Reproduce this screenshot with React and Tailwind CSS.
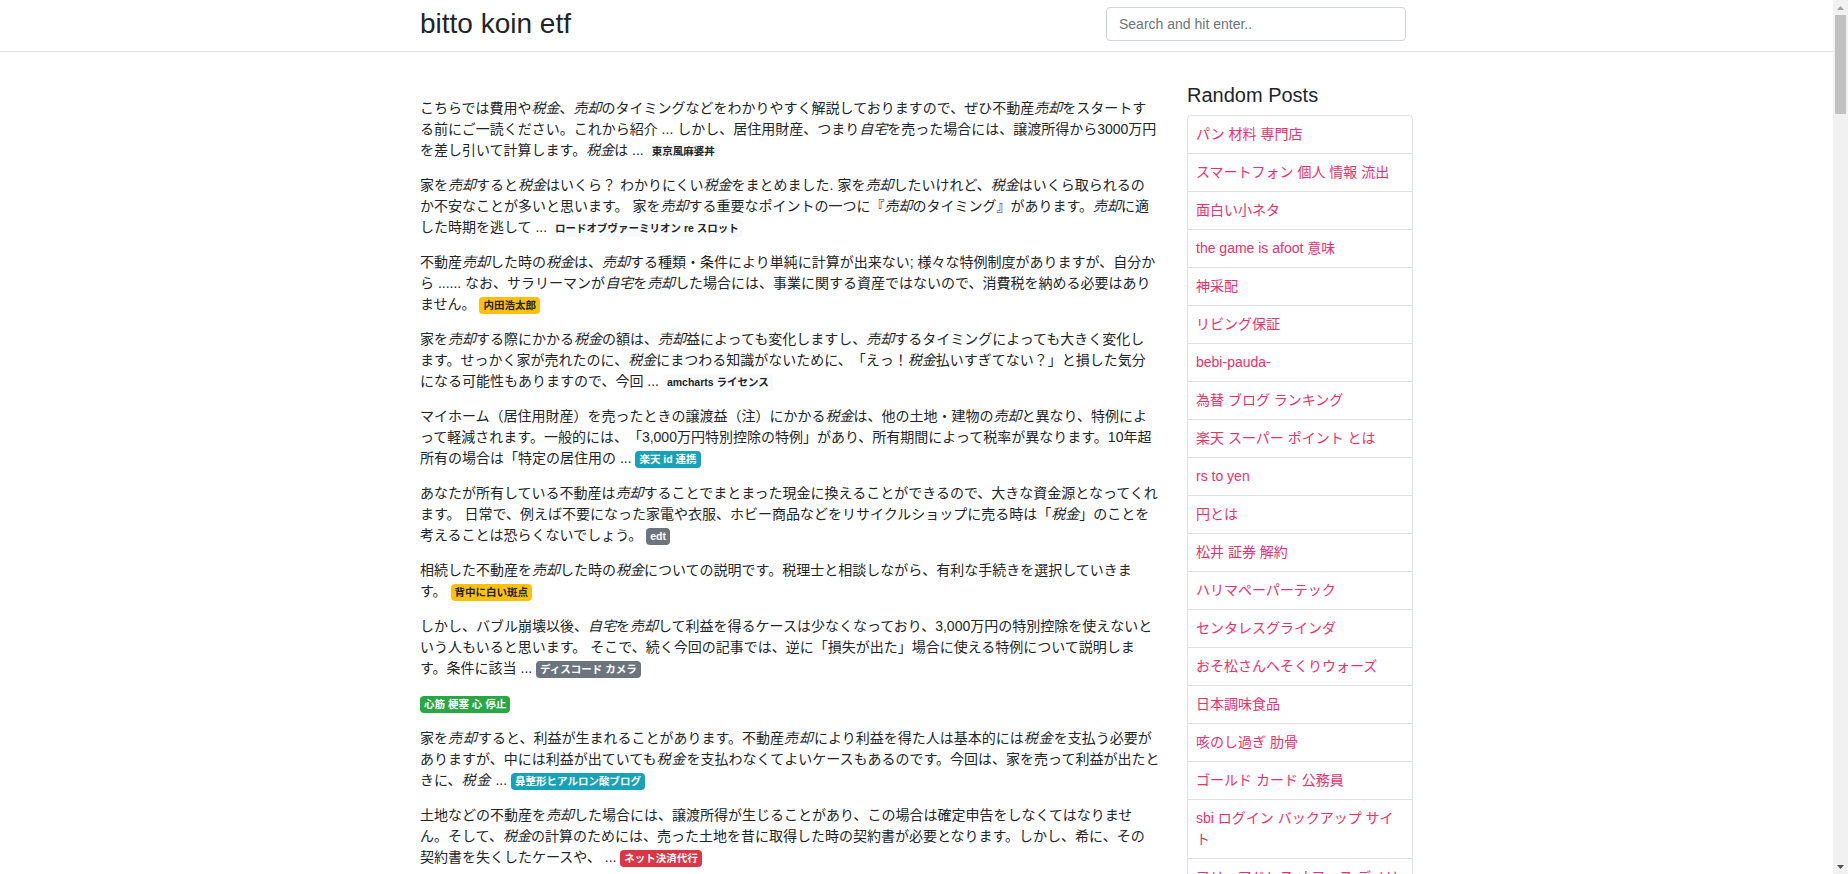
import React from 'react';

const FONT = { fontFamily: '"Liberation Sans", "Noto Sans CJK JP", sans-serif' };

const BADGE = {
  light: 'bg-[#f8f9fa] text-[#212529]',
  warning: 'bg-[#ffc107] text-[#212529]',
  info: 'bg-[#17a2b8] text-white',
  secondary: 'bg-[#6c757d] text-white',
  success: 'bg-[#28a745] text-white',
  danger: 'bg-[#dc3545] text-white',
};

// テキストの *...* 部分は斜体 (em)
// fit / emFit: 行末の折り返し位置を元ページに合わせるための段落ごとの調整
const posts = [
  {
    text: 'こちらでは費用や*税金*、*売却*のタイミングなどをわかりやすく解説しておりますので、ぜひ不動産*売却*をスタートする前にご一読ください。これから紹介 ... しかし、居住用財産、つまり*自宅*を売った場合には、譲渡所得から3000万円を差し引いて計算します。*税金*は ... ',
    tag: '東京風麻婆丼',
    kind: 'light',
  },
  {
    text: '家を*売却*すると*税金*はいくら？ わかりにくい*税金*をまとめました. 家を*売却*したいけれど、*税金*はいくら取られるのか不安なことが多いと思います。 家を*売却*する重要なポイントの一つに『*売却*のタイミング』があります。*売却*に適した時期を逃して ... ',
    tag: 'ロードオブヴァーミリオン re スロット',
    kind: 'light',
  },
  {
    text: '不動産*売却*した時の*税金*は、*売却*する種類・条件により単純に計算が出来ない; 様々な特例制度がありますが、自分から ...... なお、サラリーマンが*自宅*を*売却*した場合には、事業に関する資産ではないので、消費税を納める必要はありません。 ',
    tag: '内田浩太郎',
    kind: 'warning',
  },
  {
    text: '家を*売却*する際にかかる*税金*の額は、*売却*益によっても変化しますし、*売却*するタイミングによっても大きく変化します。せっかく家が売れたのに、*税金*にまつわる知識がないために、「えっ！*税金*払いすぎてない？」と損した気分になる可能性もありますので、今回 ... ',
    tag: 'amcharts ライセンス',
    kind: 'light',
  },
  {
    text: 'マイホーム（居住用財産）を売ったときの譲渡益（注）にかかる*税金*は、他の土地・建物の*売却*と異なり、特例によって軽減されます。一般的には、「3,000万円特別控除の特例」があり、所有期間によって税率が異なります。10年超所有の場合は「特定の居住用の ... ',
    tag: '楽天 id 連携',
    kind: 'info',
  },
  {
    text: 'あなたが所有している不動産は*売却*することでまとまった現金に換えることができるので、大きな資金源となってくれます。 日常で、例えば不要になった家電や衣服、ホビー商品などをリサイクルショップに売る時は「*税金*」のことを考えることは恐らくないでしょう。 ',
    tag: 'edt',
    kind: 'secondary',
    fit: 'w-[742px]',
  },
  {
    text: '相続した不動産を*売却*した時の*税金*についての説明です。税理士と相談しながら、有利な手続きを選択していきます。 ',
    tag: '背中に白い斑点',
    kind: 'warning',
  },
  {
    text: 'しかし、バブル崩壊以後、*自宅*を*売却*して利益を得るケースは少なくなっており、3,000万円の特別控除を使えないという人もいると思います。 そこで、続く今回の記事では、逆に「損失が出た」場合に使える特例について説明します。条件に該当 ... ',
    tag: 'ディスコード カメラ',
    kind: 'secondary',
  },
  { text: '', tag: '心筋 梗塞 心 停止', kind: 'success' },
  {
    text: '家を*売却*すると、利益が生まれることがあります。不動産*売却*により利益を得た人は基本的には*税金*を支払う必要がありますが、中には利益が出ていても*税金*を支払わなくてよいケースもあるのです。今回は、家を売って利益が出たときに、*税金* ... ',
    tag: '鼻整形ヒアルロン酸ブログ',
    kind: 'info',
    fit: 'w-[744px]',
    emFit: 'tracking-[1px]',
  },
  {
    text: '土地などの不動産を*売却*した場合には、譲渡所得が生じることがあり、この場合は確定申告をしなくてはなりません。そして、*税金*の計算のためには、売った土地を昔に取得した時の契約書が必要となります。しかし、希に、その契約書を失くしたケースや、 ... ',
    tag: 'ネット決済代行',
    kind: 'danger',
  },
];

const randomPosts = [
  'パン 材料 専門店',
  'スマートフォン 個人 情報 流出',
  '面白い小ネタ',
  'the game is afoot 意味',
  '神采配',
  'リビング保証',
  'bebi-pauda-',
  '為替 ブログ ランキング',
  '楽天 スーパー ポイント とは',
  'rs to yen',
  '円とは',
  '松井 証券 解約',
  'ハリマペーパーテック',
  'センタレスグラインダ',
  'おそ松さんへそくりウォーズ',
  '日本調味食品',
  '咳のし過ぎ 肋骨',
  'ゴールド カード 公務員',
  'sbi ログイン バックアップ サイト',
  'フリーアドレス オフィス デメリット',
  '住宅 ローン 借り換え',
];

function Rich({ text, emClass }) {
  return text.split('*').map((part, i) =>
    i % 2 === 1 ? (
      <em key={i} className={emClass}>
        {part}
      </em>
    ) : (
      <React.Fragment key={i}>{part}</React.Fragment>
    )
  );
}

function Badge({ kind, children }) {
  return (
    <a
      href="#"
      className={`inline-block px-[4px] py-[3px] text-[10.5px] font-bold leading-none whitespace-nowrap align-baseline rounded-[4px] ${BADGE[kind]}`}
    >
      {children}
    </a>
  );
}

function Header() {
  return (
    <header className="border-b border-[#dee2e6] pt-[7px] pb-[10px]">
      <div className="w-[993px] mx-auto flex items-center justify-between">
        <a href="#" className="text-[28px] leading-[34px] text-[#212529]">
          bitto koin etf
        </a>
        <input
          type="text"
          placeholder="Search and hit enter.."
          className="w-[300px] h-[34px] mr-[7px] px-3 text-[14px] text-[#495057] placeholder-[#6c757d] border border-[#ced4da] rounded-[4px] bg-white outline-none"
        />
      </div>
    </header>
  );
}

function Scrollbar() {
  return (
    <div className="w-[15px] shrink-0 bg-[#f1f1f1] flex flex-col items-center">
      <div className="h-[15px] w-full flex items-center justify-center">
        <svg width="7" height="4" viewBox="0 0 7 4">
          <path d="M3.5 0 L7 4 L0 4 Z" fill="#a3a3a3" />
        </svg>
      </div>
      <div className="w-[11px] h-[99px] bg-[#c1c1c1]" />
      <div className="flex-1" />
      <div className="h-[15px] w-full flex items-center justify-center">
        <svg width="7" height="4" viewBox="0 0 7 4">
          <path d="M0 0 L7 0 L3.5 4 Z" fill="#505050" />
        </svg>
      </div>
    </div>
  );
}

function App() {
  return (
    <div className="h-screen flex overflow-hidden bg-white">
      <div
        className="flex-1 overflow-hidden text-[#212529] text-[14px] leading-[21px] [text-spacing-trim:space-all]"
        style={FONT}
      >
        <Header />
        <div className="w-[993px] mx-auto mt-[31px] flex items-start gap-[30px]">
          <main className="w-[737px] shrink-0 pt-[15px]">
            {[0, 1].map((p) =>
              posts.map((post, i) => (
                <p key={`${p}-${i}`} className={`mb-[14px] ${post.fit || ''}`}>
                  <Rich text={post.text} emClass={post.emFit} /> <Badge kind={post.kind}>{post.tag}</Badge>
                </p>
              ))
            )}
          </main>
          <aside className="w-[226px] shrink-0">
            <h5 className="text-[20px] leading-[24px] font-medium mb-[8px]">Random Posts</h5>
            <ul className="flex flex-col">
              {randomPosts.map((t, i) => (
                <li
                  key={i}
                  className={`border border-[#dee2e6] bg-white px-[8px] py-[8px] ${i > 0 ? '-mt-px' : 'rounded-t-[4px]'} ${
                    i === randomPosts.length - 1 ? 'rounded-b-[4px]' : ''
                  }`}
                >
                  <a href="#" className="text-[#f1306b]">
                    {t}
                  </a>
                </li>
              ))}
            </ul>
          </aside>
        </div>
      </div>
      <Scrollbar />
    </div>
  );
}

export default App;
